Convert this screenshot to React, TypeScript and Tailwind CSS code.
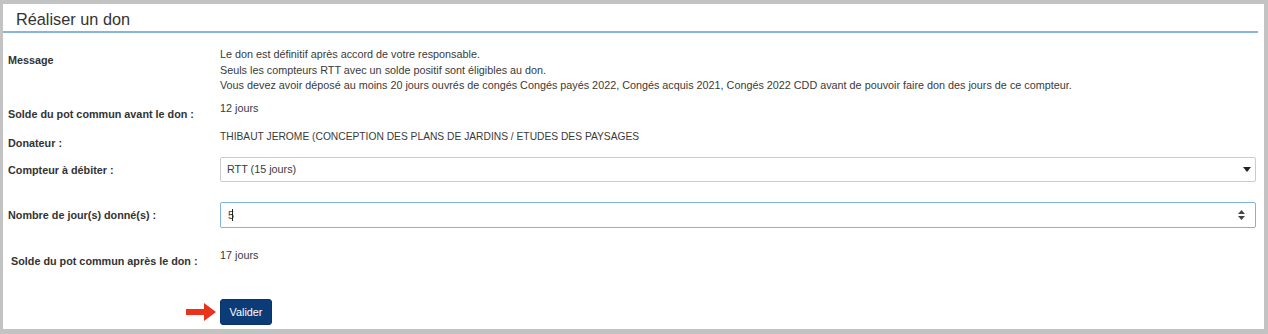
import React from 'react';

const Label: React.FC<{ children: React.ReactNode; className?: string }> = ({ children, className = '' }) => (
  <div className={`w-[212px] shrink-0 text-[10.8px] leading-[16px] font-bold text-[#333] ${className}`}>{children}</div>
);

const App: React.FC = () => {
  return (
    <div className="w-[1268px] h-[334px] bg-[#c3c3c3] pt-[4px] pl-[3px] pr-[4px] pb-[5px] font-['Liberation_Sans',Arial,sans-serif]">
      <div className="h-full bg-white">
        {/* Header */}
        <div className="mr-[6px] pt-[5px] pb-[2px] border-b-2 border-[#86b6dc]">
          <h1 className="pl-[13px] text-[16.3px] leading-[20px] text-[#333]">Réaliser un don</h1>
        </div>

        <div className="pl-[5px] pr-[8px]">
          {/* Message */}
          <div className="flex mt-[14px]">
            <Label className="mt-[5px]">Message</Label>
            <div className="text-[10.8px] leading-[15.5px] text-[#3a3a3a]">
              <div>Le don est définitif après accord de votre responsable.</div>
              <div>Seuls les compteurs RTT avec un solde positif sont éligibles au don.</div>
              <div>
                Vous devez avoir déposé au moins 20 jours ouvrés de congés Congés payés 2022, Congés acquis 2021, Congés 2022 CDD avant de pouvoir faire don des jours de ce compteur.
              </div>
            </div>
          </div>

          {/* Solde avant */}
          <div className="flex items-start mt-[6.5px]">
            <Label className="mt-[6px]">Solde du pot commun avant le don :</Label>
            <div className="text-[10.8px] leading-[16px] text-[#3a3a3a]">12 jours</div>
          </div>

          {/* Donateur */}
          <div className="flex items-start mt-[7px]">
            <Label className="mt-[6px]">Donateur :</Label>
            <div className="text-[10.25px] leading-[16px] text-[#3a3a3a]">
              THIBAUT JEROME (CONCEPTION DES PLANS DE JARDINS / ETUDES DES PAYSAGES
            </div>
          </div>

          {/* Compteur */}
          <div className="flex items-start mt-[6px]">
            <Label className="mt-[5px]">Compteur à débiter :</Label>
            <div className="flex-1 h-[25px] border border-[#cccccc] rounded-[2px] flex items-center justify-between pl-[6px] pr-[4px] text-[10.8px] text-[#3a3a3a]">
              <span>RTT (15 jours)</span>
              <svg width="8" height="5" viewBox="0 0 8 5">
                <polygon points="0,0 8,0 4,5" fill="#222" />
              </svg>
            </div>
          </div>

          {/* Nombre */}
          <div className="flex items-start mt-[20px]">
            <Label className="mt-[5px]">Nombre de jour(s) donné(s) :</Label>
            <div className="flex-1 h-[26px] border border-[#80b4dc] rounded-[2px] flex items-center justify-between pl-[7px] pr-[10px] text-[10.8px] text-[#3a3a3a]">
              <span className="flex items-center">
                5<span className="inline-block w-px h-[12px] bg-[#222] -ml-[2px]" />
              </span>
              <svg width="7" height="10" viewBox="0 0 7 10">
                <polygon points="0,4 7,4 3.5,0" fill="#444" />
                <polygon points="0,6 7,6 3.5,10" fill="#444" />
              </svg>
            </div>
          </div>

          {/* Solde après */}
          <div className="flex items-start mt-[19px]">
            <Label className="mt-[6px] pl-[3px]">Solde du pot commun après le don :</Label>
            <div className="text-[10.8px] leading-[16px] text-[#3a3a3a]">17 jours</div>
          </div>

          {/* Valider */}
          <div className="flex items-center mt-[30px] pl-[178px] gap-[4px]">
            <svg width="30" height="18" viewBox="0 0 30 18">
              <rect x="0" y="6" width="19" height="6" fill="#e8341c" />
              <polygon points="18,0 30,9 18,18" fill="#e8341c" />
            </svg>
            <button className="w-[52px] h-[26px] bg-[#0c3c78] rounded-[3px] text-white text-[10.8px] leading-[16px] border border-[#0a3466]">
              Valider
            </button>
          </div>
        </div>
      </div>
    </div>
  );
};

export default App;
